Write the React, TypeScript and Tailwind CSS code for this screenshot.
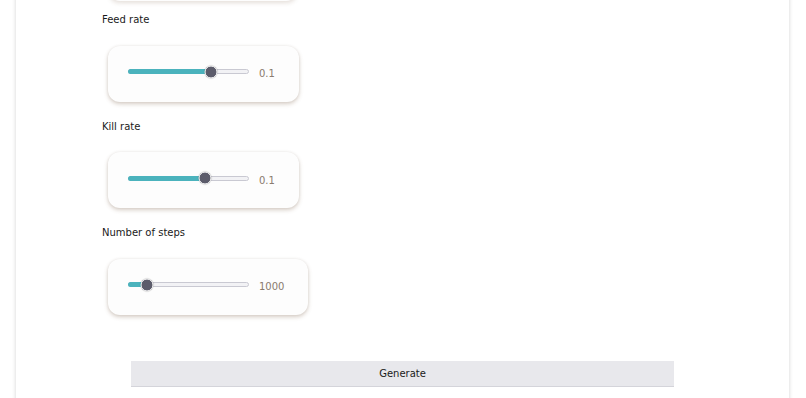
import React from 'react';

type SliderProps = {
  value: string;
  pct: number;
};

function SliderCard({ value, pct }: SliderProps) {
  return (
    <div className="ml-[6px] inline-flex h-[56px] items-center rounded-[12px] bg-[#fdfdfd] pl-[20px] pr-[24px] shadow-[0_2px_4px_rgba(110,80,50,0.28),0_0_3px_rgba(0,0,0,0.06)]">
      <div className="relative mt-[-4px] h-[5px] w-[121px] rounded-full border border-[#c9c9d2] bg-[#f2f2f5]">
        <div
          className="absolute left-[-1px] top-[-1px] h-[5px] rounded-full bg-[#4bb3bd]"
          style={{ width: `${pct}%` }}
        />
        <div
          className="absolute top-1/2 h-[13px] w-[13px] -translate-x-1/2 -translate-y-1/2 rounded-full border border-white bg-[#5c5c6b] shadow-[0_0_1px_rgba(0,0,0,0.4)]"
          style={{ left: `${pct}%` }}
        />
      </div>
      <span className="ml-[10px] text-[10px] text-[#8a7b6e]">{value}</span>
    </div>
  );
}

function Field({ label, children }: { label: string; children: React.ReactNode }) {
  return (
    <div>
      <div className="h-[16.5px] text-[10px] leading-[16.5px] text-[#1a1a1a]">{label}</div>
      <div className="py-[17px]">{children}</div>
    </div>
  );
}

export default function App() {
  return (
    <div
      className="h-[398px] overflow-hidden bg-white pl-[16px] pr-[17px]"
      style={{ fontFamily: '"DejaVu Sans", sans-serif' }}
    >
      <div className="mt-[-56px] min-h-[500px] bg-white px-[86px] shadow-[0_0_4px_rgba(0,0,0,0.18)]">
        <div className="pb-[11px] pt-[1px]">
          <div className="ml-[6px] h-[56px] w-[190px] rounded-[12px] bg-[#fdfdfd] shadow-[0_2px_4px_rgba(110,80,50,0.18)]" />
        </div>
        <Field label="Feed rate">
          <SliderCard value="0.1" pct={69} />
        </Field>
        <Field label="Kill rate">
          <SliderCard value="0.1" pct={64} />
        </Field>
        <Field label="Number of steps">
          <SliderCard value="1000" pct={15} />
        </Field>
        <div className="mx-[29px] mt-[28px]">
          <button className="h-[26px] w-full border-b border-[#d4d4da] bg-[#e8e8ec] text-[10px] text-[#1a1a1a]">
            Generate
          </button>
        </div>
      </div>
    </div>
  );
}
